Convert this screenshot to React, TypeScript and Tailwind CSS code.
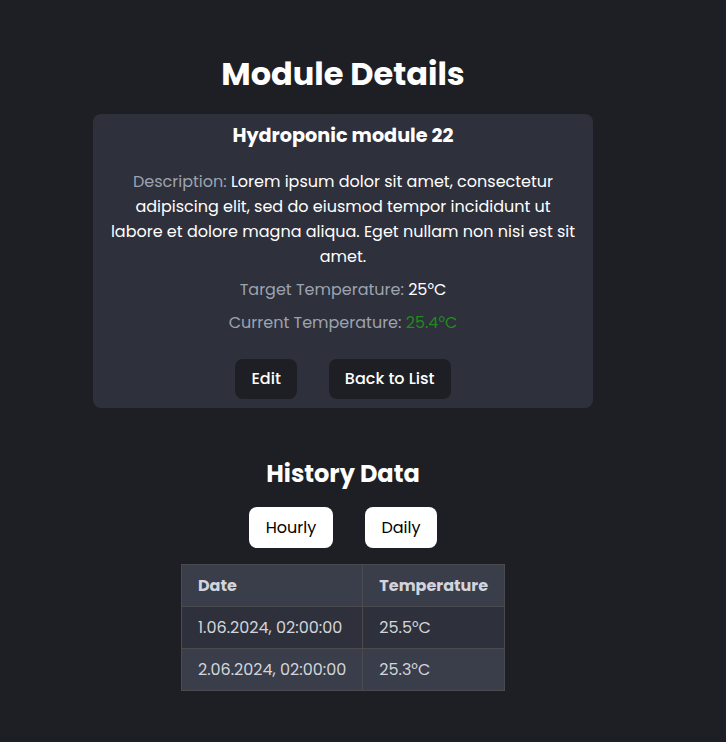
export default function App() {
    const rows = [
        { date: "1.06.2024, 02:00:00", temp: "25.5°C" },
        { date: "2.06.2024, 02:00:00", temp: "25.3°C" },
    ];

    return (
        <div
            className="min-h-[742px] w-full bg-[#1e1f24] text-white"
            style={{ fontFamily: "Poppins, 'Open Sans', 'DejaVu Sans', sans-serif" }}
        >
            <div className="w-[686px] flex flex-col items-center pt-[50px]">
                <h1 className="text-[32px] font-bold leading-[48px]">Module Details</h1>

                <div className="mt-4 w-[500px] rounded-lg bg-[#2e303b] px-4 pt-2 pb-[9px] flex flex-col items-center text-center">
                    <h2 className="text-[19.2px] font-bold leading-7">Hydroponic module 22</h2>
                    <p className="mt-[19px] text-base leading-[25px]">
                        <span className="text-[#9ca3af]">Description: </span>
                        Lorem ipsum dolor sit amet, consectetur adipiscing elit, sed do eiusmod tempor incididunt ut labore et dolore magna aliqua. Eget nullam non nisi est sit amet.
                    </p>
                    <p className="mt-2 text-base leading-[25px]">
                        <span className="text-[#9ca3af]">Target Temperature: </span>25°C
                    </p>
                    <p className="mt-2 text-base leading-[25px]">
                        <span className="text-[#9ca3af]">Current Temperature: </span>
                        <span className="text-[#1f8a1f]">25.4°C</span>
                    </p>
                    <div className="mt-6 flex gap-8">
                        <button className="h-10 rounded-lg bg-[#1e1f24] px-4 text-base font-medium">Edit</button>
                        <button className="h-10 rounded-lg bg-[#1e1f24] px-4 text-base font-medium">Back to List</button>
                    </div>
                </div>

                <h2 className="mt-12 text-2xl font-bold leading-9">History Data</h2>
                <div className="mt-[15px] flex gap-8">
                    <button className="h-[41px] w-[84px] rounded-lg bg-white text-base text-black">Hourly</button>
                    <button className="h-[41px] w-[72px] rounded-lg bg-white text-base text-black">Daily</button>
                </div>

                <table className="mt-4 border-collapse border border-[#4a4a4f] text-base">
                    <thead>
                        <tr className="bg-[#3a3d4a] h-[42px]">
                            <th className="border border-[#4a4a4f] px-4 text-left font-bold text-[#d1d5db] whitespace-nowrap">Date</th>
                            <th className="border border-[#4a4a4f] px-4 text-left font-bold text-[#d1d5db] whitespace-nowrap">Temperature</th>
                        </tr>
                    </thead>
                    <tbody>
                        {rows.map((r, i) => (
                            <tr key={r.date} className={`h-[42px] ${i % 2 === 0 ? "bg-[#2e303b]" : "bg-[#3a3d4a]"}`}>
                                <td className="border border-[#4a4a4f] px-4 text-[#d1d5db] whitespace-nowrap">{r.date}</td>
                                <td className="border border-[#4a4a4f] px-4 text-[#d1d5db] whitespace-nowrap">{r.temp}</td>
                            </tr>
                        ))}
                    </tbody>
                </table>
            </div>
        </div>
    );
}
